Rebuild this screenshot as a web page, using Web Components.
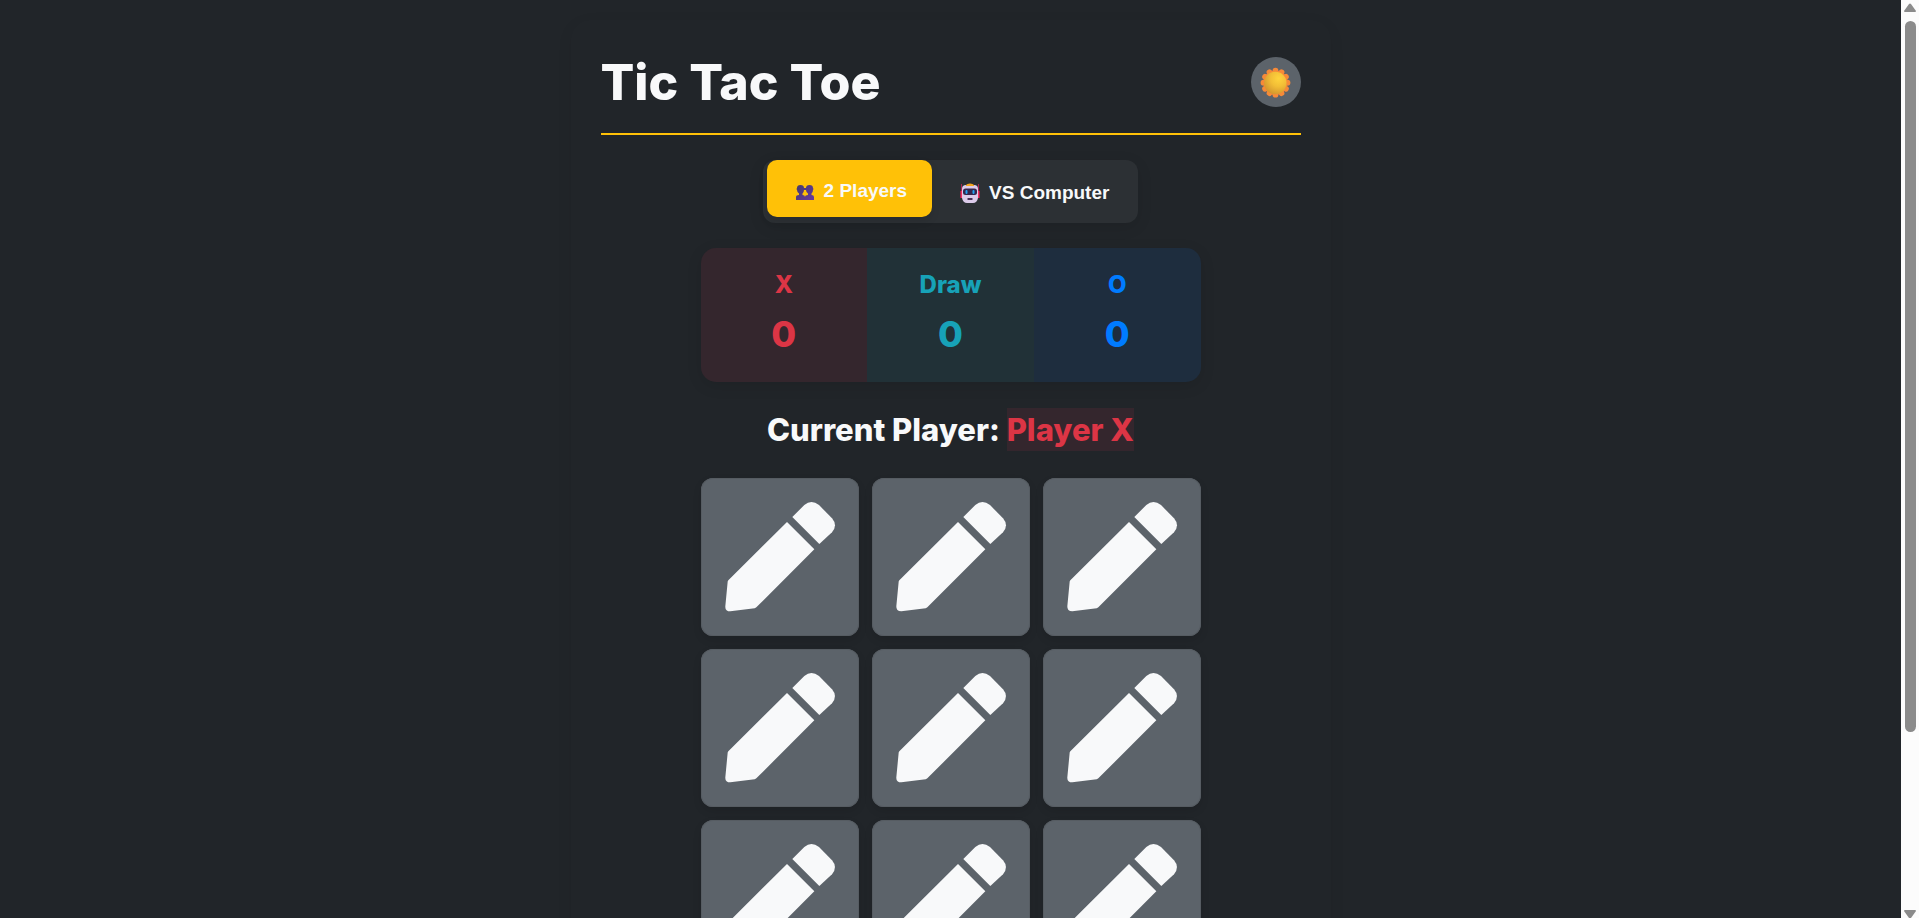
<!DOCTYPE html>
<html lang="en">
<head>
<meta charset="utf-8">
<meta name="viewport" content="width=device-width, initial-scale=1">
<title>Tic Tac Toe</title>
<style>
body { margin: 0; background: #212529; color: #f8f9fa; font-family: Inter, "Open Sans", sans-serif; }
</style>
</head>
<body>
<game-app></game-app>
<script>
class BaseElement extends HTMLElement {
  constructor() {
    super();
    this.attachShadow({ mode: 'open' }).innerHTML = this.render();
  }
}

class PencilIcon extends BaseElement {
  render() {
    return `<style>:host { display: block; } svg { display: block; width: 100%; height: 100%; }</style>
    <svg viewBox="0 0 474 474" fill="#f8f9fa" aria-hidden="true">
      <path d="M274 117L310 81Q331 63 354 81L393 121Q411 142 393 163L355 198Z"/>
      <path d="M258 132L340 214L166 388Q164 390 161 391L88 400Q72 400 73 385L80 311Q80 309 82 307Z"/>
    </svg>`;
  }
}
customElements.define('pencil-icon', PencilIcon);

class ThemeToggle extends BaseElement {
  render() {
    const petals = Array.from({ length: 12 }, (_, i) =>
      `<circle cx="15.5" cy="4.7" r="2.9" transform="rotate(${i * 30} 15.5 16.7)"/>`).join('');
    return `<style>
      :host { display: block; }
      button { display: grid; place-items: center; width: 50px; height: 50px; padding: 0; border: 0; border-radius: 50%; background: #5c636a; cursor: pointer; }
      svg { width: 32px; height: 32px; }
    </style>
    <button type="button" aria-label="Light theme">
      <svg viewBox="0 0 32 32" aria-hidden="true">
        <defs>
          <radialGradient id="d" cx=".65" cy=".3" r=".8"><stop offset="0" stop-color="#ffd43d"/><stop offset=".45" stop-color="#f2be36"/><stop offset="1" stop-color="#cf902d"/></radialGradient>
        </defs>
        <g fill="#f78a38">${petals}<circle cx="15.5" cy="16.7" r="12.2"/></g>
        <circle cx="15.3" cy="17" r="11.2" fill="url(#d)"/>
      </svg>
    </button>`;
  }
}
customElements.define('theme-toggle', ThemeToggle);

class GameHeader extends BaseElement {
  render() {
    return `<style>
      :host { display: block; }
      header { display: flex; align-items: center; justify-content: space-between; padding-bottom: 26px; border-bottom: 2px solid #ffc107; }
      h1 { margin: 0; font-size: 50px; line-height: 50px; font-weight: 800; }
    </style>
    <header><h1><slot></slot></h1><theme-toggle></theme-toggle></header>`;
  }
}
customElements.define('game-header', GameHeader);

class ModeButton extends BaseElement {
  render() {
    return `<style>
      :host { display: block; }
      button { box-sizing: border-box; display: flex; align-items: center; gap: 8px; height: 57px; padding: 4px 25px 0; border: 0; border-radius: 10px; background: none; color: #f8f9fa; font: bold 19px "Liberation Sans", Arial, sans-serif; white-space: nowrap; cursor: pointer; }
      :host([active]) button { background: #ffc107; transform: translateY(-2px); box-shadow: 0 4px 8px rgba(0,0,0,.1); }
      ::slotted(svg) { width: 24px; height: 24px; }
    </style>
    <button type="button"><slot name="icon"></slot><span><slot></slot></span></button>`;
  }
}
customElements.define('mode-button', ModeButton);

class ModeSwitch extends BaseElement {
  render() {
    return `<style>
      :host { display: flex; width: fit-content; margin: 0 auto; padding: 2px 4px 4px; border-radius: 12px; background: #2c3034; box-shadow: 0 4px 15px rgba(0,0,0,.1); }
    </style>
    <mode-button active>
      <svg slot="icon" viewBox="0 0 24 24" aria-hidden="true">
        <defs><linearGradient id="b" gradientUnits="userSpaceOnUse" x1="4" y1="6" x2="20" y2="22"><stop offset="0" stop-color="#433b6b"/><stop offset="1" stop-color="#6738a0"/></linearGradient></defs>
        <g fill="url(#b)"><path d="M4 21V18Q4 16 7 16V14.5Q5 13 5 11Q4 10 5 9Q5 6 8.500 6Q12 6 12 9Q13 10 12 11Q12 13 10.500 14.500V16Q13 16 13 18V21Z"/><path d="M13 21V18Q13 16 16 16V14.500Q14 13 14 11Q13 10 14 9Q14 6 17.500 6Q21 6 21 9Q22 10 21 11Q21 13 19.500 14.500V16Q22 16 22 18V21Z"/><path d="M11 9H15V11H11Z"/></g>
      </svg>2 Players</mode-button>
    <mode-button>
      <svg slot="icon" viewBox="0 0 24 24" aria-hidden="true">
        <path d="M4.500 3V12M21.500 3V12" stroke="#a92651" stroke-width="1"/>
        <path d="M4.500 10V17M21.500 10V17" stroke="#f52f65" stroke-width="2"/>
        <path d="M5 8Q5 4 9 4H17Q21 4 21 8V17Q20 22 16 22H10Q6 22 5 17Z" fill="#dccbea"/>
        <path d="M9 4Q10 2.500 13 2.500Q16 2.500 17 4V5H9Z" fill="#f4a51f"/>
        <rect x="6" y="7.500" width="14" height="6.500" rx="2.500" fill="#35264d"/>
        <rect x="8.500" y="9" width="2" height="4" rx="1" fill="#24a5f5"/><rect x="15.500" y="9" width="2" height="4" rx="1" fill="#24a5f5"/>
        <rect x="10.500" y="17" width="5" height="2" rx=".5" fill="#4a3158"/>
      </svg>VS Computer</mode-button>`;
  }
}
customElements.define('mode-switch', ModeSwitch);

class ScoreItem extends BaseElement {
  render() {
    return `<style>
      :host { display: flex; flex-direction: column; align-items: center; gap: 6px; padding: 18px 0 24px; background: var(--tint); color: var(--ink); font-weight: 800; }
      .label { font-size: 24px; line-height: 38px; }
      .value { font-size: 36px; line-height: 48px; }
    </style>
    <span class="label"><slot></slot></span><span class="value"><slot name="value"></slot></span>`;
  }
}
customElements.define('score-item', ScoreItem);

class ScoreBoard extends BaseElement {
  render() {
    return `<style>
      :host { display: grid; grid-template-columns: repeat(3, 1fr); border-radius: 15px; overflow: hidden; box-shadow: 0 4px 15px rgba(0,0,0,.1); }
      .x { --ink: #dc3545; --tint: #34262d; }
      .draw { --ink: #17a2b8; --tint: #213137; }
      .o { --ink: #007bff; --tint: #1e2d3e; }
    </style>
    <score-item class="x">X<span slot="value">0</span></score-item>
    <score-item class="draw">Draw<span slot="value">0</span></score-item>
    <score-item class="o">O<span slot="value">0</span></score-item>`;
  }
}
customElements.define('score-board', ScoreBoard);

class GameStatus extends BaseElement {
  render() {
    return `<style>
      :host { display: block; text-align: center; }
      p { margin: 0; font-size: 31px; line-height: 43px; font-weight: 800; }
      span { display: inline-block; color: #dc3545; background: #34262d; }
    </style>
    <p>Current Player: <span>Player X</span></p>`;
  }
}
customElements.define('game-status', GameStatus);

class GameCell extends BaseElement {
  render() {
    return `<style>
      :host { display: block; }
      button { display: block; width: 100%; aspect-ratio: 1; padding: 0; border: 0; border-radius: 12px; background: #5c636a; box-shadow: 0 4px 8px rgba(0,0,0,.1), inset 0 0 0 1px #565c62; cursor: pointer; }
    </style>
    <button type="button" aria-label="Empty square"><pencil-icon></pencil-icon></button>`;
  }
}
customElements.define('game-cell', GameCell);

class GameBoard extends BaseElement {
  render() {
    return `<style>:host { display: grid; grid-template-columns: repeat(3, 1fr); gap: 13px; }</style>
    ${'<game-cell></game-cell>'.repeat(9)}`;
  }
}
customElements.define('game-board', GameBoard);

class PageScroller extends BaseElement {
  render() {
    return `<style>
      :host { display: flex; flex-direction: column; align-items: center; width: 18px; background: #fcfcfc; overflow: hidden; }
      svg { display: block; flex: none; width: 12px; height: 9px; margin: 3px 0 9px; fill: #8b8b8b; }
      .track { flex: 1; }
      .thumb { width: 11px; height: 80%; border-radius: 6px; background: #8b8b8b; }
      .down { height: 8px; margin: 0; transform: rotate(180deg); }
    </style>
    <svg viewBox="0 0 12 9"><path d="M5 1Q6 0 7 1L12 8Q12 9 11 9H1Q0 9 0 8Z"/></svg>
    <div class="track"><div class="thumb"></div></div>
    <svg class="down" viewBox="0 1 12 8"><path d="M5 1Q6 0 7 1L12 8Q12 9 11 9H1Q0 9 0 8Z"/></svg>`;
  }
}
customElements.define('page-scroller', PageScroller);

class GameApp extends BaseElement {
  render() {
    return `<style>
      :host { display: flex; height: 100vh; overflow: hidden; }
      main { flex: 1; min-width: 0; overflow: hidden; padding: 20px; }
      .card { box-sizing: border-box; max-width: 760px; margin: 0 auto; padding: 37px 30px; border-radius: 20px; box-shadow: 0 4px 15px rgba(0,0,0,.07); }
      .play { display: flex; flex-direction: column; gap: 26px; max-width: 500px; margin: 25px auto 0; }
      mode-switch { margin-bottom: -1px; }
      game-board { margin-top: 1px; }
    </style>
    <main><div class="card">
      <game-header>Tic Tac Toe</game-header>
      <div class="play">
        <mode-switch></mode-switch>
        <score-board></score-board>
        <game-status></game-status>
        <game-board></game-board>
      </div>
    </div></main>
    <page-scroller></page-scroller>`;
  }
}
customElements.define('game-app', GameApp);
</script>
</body>
</html>
